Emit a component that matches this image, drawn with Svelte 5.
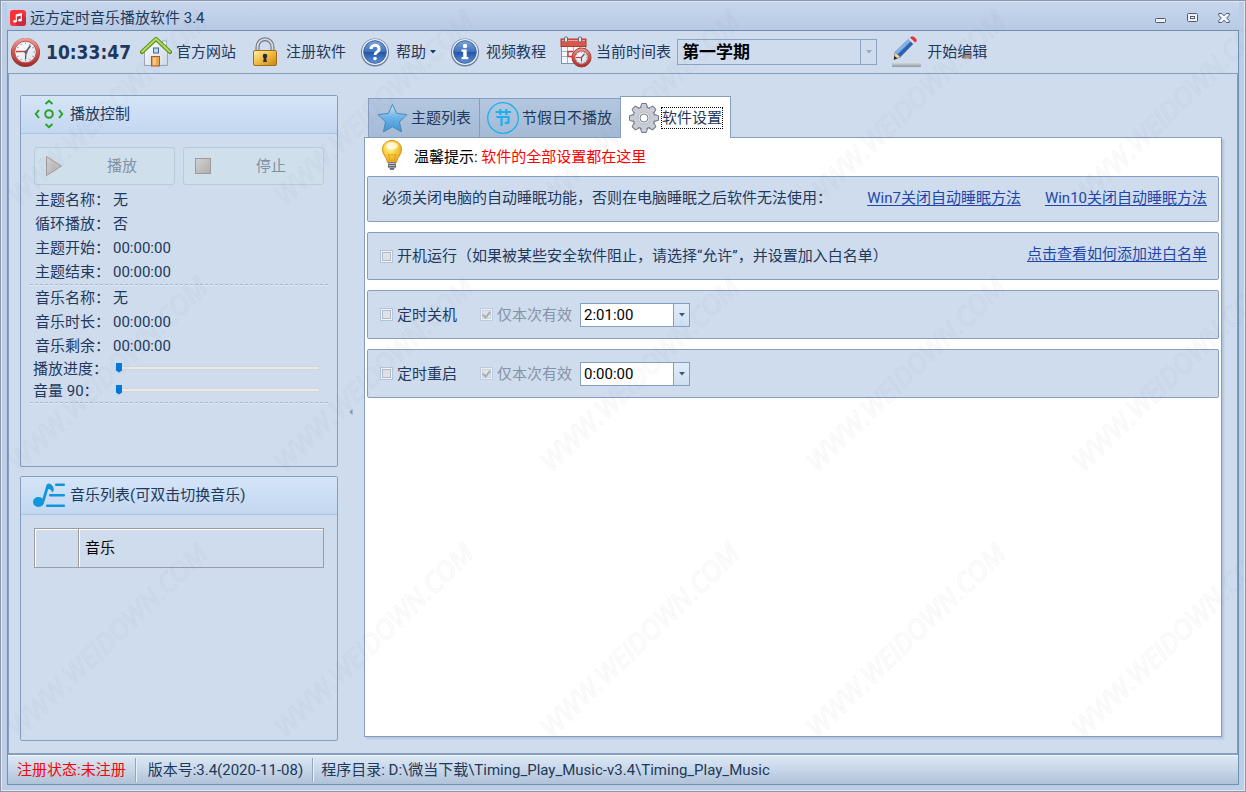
<script>
  const themeRows = [
    ['主题名称：', '无'],
    ['循环播放：', '否'],
    ['主题开始：', '00:00:00'],
    ['主题结束：', '00:00:00']
  ];
  const musicRows = [
    ['音乐名称：', '无'],
    ['音乐时长：', '00:00:00'],
    ['音乐剩余：', '00:00:00']
  ];
  const timers = [
    { id: 'shutdown', label: '定时关机', time: '2:01:00' },
    { id: 'restart', label: '定时重启', time: '0:00:00' }
  ];
  const teeth = [0, 45, 90, 135, 180, 225, 270, 315];
  const ticks = [0, 30, 60, 90, 120, 150, 180, 210, 240, 270, 300, 330];
</script>

<div class="window" lang="zh-CN">
  <header class="titlebar">
    <svg class="app-icon" viewBox="0 0 16 16" width="16" height="16" aria-hidden="true">
      <rect width="16" height="16" rx="3" fill="#fb3038" />
      <path d="M6 4.5 11.5 3.3 16 8v5a3 3 0 0 1-3 3H8l-3-3z" fill="#b92a3c" opacity=".75" />
      <path d="M6.3 11V5l5-1.2v6" fill="none" stroke="#fff" stroke-width="1.2" />
      <path d="M6.3 5.2l5-1.2v1.6l-5 1.2z" fill="#fff" />
      <ellipse cx="5" cy="11.3" rx="1.8" ry="1.4" fill="#fff" />
      <ellipse cx="10" cy="10.2" rx="1.8" ry="1.4" fill="#fff" />
    </svg>
    <span class="title">远方定时音乐播放软件 3.4</span>
    <button class="winbtn" aria-label="最小化">
      <svg viewBox="0 0 12 12" width="12" height="12"><rect x=".5" y="6.5" width="10" height="4" rx="1" fill="#eef2f8" stroke="#4f5a70" /></svg>
    </button>
    <button class="winbtn" aria-label="最大化">
      <svg viewBox="0 0 12 12" width="12" height="12"><rect x=".5" y="1.5" width="10" height="8" rx="1" fill="#eef2f8" stroke="#4f5a70" /><rect x="3.5" y="4.5" width="4" height="2" fill="#fff" stroke="#4f5a70" /></svg>
    </button>
    <button class="winbtn" aria-label="关闭">
      <svg viewBox="0 0 12 12" width="12" height="12"><path d="M.8 1.5h3L6 3.8 8.2 1.5h3v2L8.6 6l2.6 2.5v2h-3L6 8.2 3.8 10.500h-3v-2L3.400 6 .8 3.500z" fill="#f3f6fb" stroke="#4f5a70" stroke-linejoin="round" /></svg>
    </button>
  </header>

  <div class="frame">
    <nav class="toolbar">
      <div class="tool clock">
        <svg viewBox="0 0 32 32" width="32" height="32" aria-hidden="true">
          <defs>
            <linearGradient id="redRing" x1="0" y1="0" x2="0" y2="1"><stop offset="0" stop-color="#f0a49c" /><stop offset=".5" stop-color="#d4544c" /><stop offset="1" stop-color="#a82a28" /></linearGradient>
            <linearGradient id="dial" x1="0" y1="0" x2="1" y2="1"><stop offset="0" stop-color="#ffffff" /><stop offset="1" stop-color="#dbe1e9" /></linearGradient>
          </defs>
          <circle cx="16.500" cy="16.500" r="14.500" fill="#8b3a3a" />
          <circle cx="16.500" cy="16" r="14" fill="url(#redRing)" />
          <circle cx="16.500" cy="16" r="10.800" fill="url(#dial)" stroke="#b25550" />
          {#each ticks as a}
            <path d="M16.500 6.500v1.500" stroke="#8d95a2" transform="rotate({a} 16.500 16)" />
          {/each}
          <path d="M17 16 21.500 9.500" stroke="#555d69" stroke-width="1.600" />
          <path d="M17 16 16.500 23.500" stroke="#555d69" stroke-width="1.300" />
          <path d="M7 15.500h10" stroke="#cf3d37" stroke-width="1.400" />
          <circle cx="17" cy="16" r="1.800" fill="#5f6874" />
        </svg>
        <time>10:33:47</time>
      </div>
      <button class="tool">
        <svg viewBox="0 0 32 32" width="32" height="32" aria-hidden="true">
          <defs><linearGradient id="wall" x1="0" y1="0" x2="1" y2="1"><stop offset="0" stop-color="#fff" /><stop offset="1" stop-color="#cfd9e4" /></linearGradient></defs>
          <rect x="22.500" y="5" width="4" height="8" fill="#f4f6f9" stroke="#a6afbd" />
          <path d="M4.500 14.500 16 4l11.500 10.500V29.500h-23z" fill="url(#wall)" stroke="#9aa5b5" />
          <path d="M2 16 16 3l14 13" fill="none" stroke="#5d8f1e" stroke-width="4.200" stroke-linecap="round" stroke-linejoin="round" />
          <path d="M2.200 15.700 16 2.800l13.800 12.900" fill="none" stroke="#b4dc62" stroke-width="2" stroke-linecap="round" />
          <rect x="13.500" y="12" width="5" height="5" fill="#bcd6f5" stroke="#49679b" />
          <rect x="11.500" y="20.500" width="8" height="9.500" fill="#e9a455" stroke="#a8601f" />
          <path d="M13 22h3v7h-3z" fill="#f8c98a" />
        </svg>
        <span>官方网站</span>
      </button>
      <button class="tool">
        <svg viewBox="0 0 32 32" width="32" height="32" aria-hidden="true">
          <defs><linearGradient id="gold" x1="0" y1="0" x2="1" y2="1"><stop offset="0" stop-color="#fff0ae" /><stop offset=".45" stop-color="#f3c04a" /><stop offset="1" stop-color="#c78416" /></linearGradient></defs>
          <path d="M7.500 17V11a7.500 7.800 0 0 1 15 0v6" fill="none" stroke="#6f7680" stroke-width="4" />
          <path d="M7.500 17V11a7.500 7.800 0 0 1 15 0v6" fill="none" stroke="#d5dae0" stroke-width="1.800" />
          <rect x="3.500" y="14.500" width="23" height="15" rx="1.500" fill="url(#gold)" stroke="#a06c14" />
          <circle cx="15" cy="20" r="2.300" fill="#2c2c30" /><path d="M14 20h2l.8 6h-3.600z" fill="#2c2c30" />
        </svg>
        <span>注册软件</span>
      </button>
      <button class="tool">
        <svg viewBox="0 0 32 32" width="32" height="32" aria-hidden="true">
          <defs>
            <linearGradient id="orb" x1="0" y1="0" x2="0" y2="1"><stop offset="0" stop-color="#7fa6dc" /><stop offset=".5" stop-color="#3c6fbe" /><stop offset=".52" stop-color="#2455a6" /><stop offset="1" stop-color="#5c93dc" /></linearGradient>
          </defs>
          <circle cx="15" cy="16.500" r="14" fill="#6c7e9d" />
          <circle cx="15" cy="16" r="13" fill="#eef2f8" />
          <circle cx="15" cy="16" r="11.300" fill="url(#orb)" stroke="#42649c" />
          <path d="M11 13a4 3.600 0 1 1 6 3c-1.500.9-2 1.500-2 3" fill="none" stroke="#fff" stroke-width="3" />
          <circle cx="15" cy="22.500" r="1.800" fill="#fff" />
        </svg>
        <span>帮助</span>
        <svg viewBox="0 0 6 4" width="6" height="4" aria-hidden="true"><path d="M0 0h6L3 3.500z" fill="#1e395b" /></svg>
      </button>
      <button class="tool">
        <svg viewBox="0 0 32 32" width="32" height="32" aria-hidden="true">
          <circle cx="15" cy="16.500" r="14" fill="#6c7e9d" />
          <circle cx="15" cy="16" r="13" fill="#eef2f8" />
          <circle cx="15" cy="16" r="11.300" fill="url(#orb)" stroke="#42649c" />
          <circle cx="15" cy="10" r="2.200" fill="#fff" />
          <path d="M11.500 13.500h5.200v7.500h1.600v2.200h-6.800V21h1.700v-5.300h-1.700z" fill="#fff" />
        </svg>
        <span>视频教程</span>
      </button>
      <div class="tool schedule">
        <svg viewBox="0 0 32 32" width="32" height="32" aria-hidden="true">
          <rect x="1.500" y="4" width="24" height="23.500" fill="#f5f8fc" stroke="#7c93b8" />
          <path d="M2 15.500h23M2 20.500h23M7.500 11v16M13.500 11v16M19.500 11v16" stroke="#9fb3d2" />
          <rect x="1" y="3" width="25" height="7.500" fill="#d9584b" stroke="#ac3a30" />
          <path d="M2 4.500h23" stroke="#f2a49a" />
          <rect x="4.500" y="1" width="3" height="5" rx="1" fill="#e1e6ed" stroke="#616b7b" /><rect x="18.500" y="1" width="3" height="5" rx="1" fill="#e1e6ed" stroke="#616b7b" />
          <path d="M13 15.500H8v5h5" fill="none" stroke="#d13a31" stroke-width="1.400" />
          <circle cx="21.500" cy="21.500" r="9.500" fill="url(#redRing)" stroke="#a33a36" />
          <circle cx="21.500" cy="21.500" r="6.700" fill="url(#dial)" stroke="#b25550" />
          {#each ticks as a}
            <path d="M21.500 15.500v1.200" stroke="#7d8694" transform="rotate({a} 21.500 21.500)" />
          {/each}
          <path d="M21.500 21.500 24.500 18M21.500 21.500v4" stroke="#555d69" stroke-width="1.200" /><path d="M16 21.500h5.500" stroke="#cf3d37" stroke-width="1.200" />
        </svg>
        <label for="term">当前时间表</label>
        <div class="select-box">
          <select id="term"><option>第一学期</option></select>
          <span class="select-arrow"><svg viewBox="0 0 6 4" width="6" height="4" aria-hidden="true"><path d="M0 0h6L3 3.500z" fill="#98a9c1" /></svg></span>
        </div>
      </div>
      <button class="tool">
        <svg viewBox="0 0 32 32" width="32" height="32" aria-hidden="true">
          <defs>
            <linearGradient id="shelf" x1="0" y1="0" x2="0" y2="1"><stop offset="0" stop-color="#dfe3e8" /><stop offset="1" stop-color="#8e98a5" /></linearGradient>
          </defs>
          <rect x="1" y="26" width="29" height="5" rx="1" fill="url(#shelf)" />
          <path d="M3 23.500 4 16 9.500 21z" fill="#f1d5a6" stroke="#7c6a4d" stroke-width=".6" />
          <path d="M2.900 23.700 3.400 20 6.500 22.300z" fill="#222" />
          <path d="M4 16 18 2.500l5 4.700L9.500 21z" fill="#2d62ae" />
          <path d="M4 16 18 2.500l2.400 2.200L6.500 18.300z" fill="#83b0e8" />
          <path d="M17.300 3.200 19 1.500l5.200 4.900-1.800 1.800z" fill="#d6dce4" />
          <path d="M19 1.500 20.500.6Q22.500.2 24.400 2T25.700 5L24.200 6.400z" fill="#e2353a" />
        </svg>
        <span>开始编辑</span>
      </button>
    </nav>

    <main class="body">
      <aside class="side">
        <section class="panel">
          <h2>
            <svg viewBox="0 0 32 32" width="32" height="32" aria-hidden="true"><g fill="none" stroke="#27a527" stroke-width="2"><circle cx="16" cy="15" r="3.800" /><path d="M12.500 5 16 1.800 19.500 5M12.500 25 16 28.200 19.500 25M6 11 2.800 15 6 19M26 11l3.200 4L26 19" /></g></svg>
            <span>播放控制</span>
          </h2>
          <div class="controls">
            <button disabled>
              <svg viewBox="0 0 24 24" width="24" height="24" aria-hidden="true"><defs><linearGradient id="grey" x1="0" y1="0" x2="1" y2="1"><stop offset="0" stop-color="#d2d2d2" /><stop offset="1" stop-color="#adadad" /></linearGradient></defs><path d="M4.500 2.500 19.500 12 4.500 21.500z" fill="url(#grey)" stroke="#a09b98" /></svg>
              <span>播放</span>
            </button>
            <button disabled>
              <svg viewBox="0 0 24 24" width="24" height="24" aria-hidden="true"><rect x="4.500" y="4.500" width="15" height="15" fill="url(#grey)" stroke="#a09b98" /></svg>
              <span>停止</span>
            </button>
          </div>
          <dl>
            {#each themeRows as [k, v]}<div><dt>{k}</dt><dd>{v}</dd></div>{/each}
          </dl>
          <hr />
          <dl>
            {#each musicRows as [k, v]}<div><dt>{k}</dt><dd>{v}</dd></div>{/each}
          </dl>
          <div class="slide"><label for="progress">播放进度：</label><input id="progress" type="range" min="0" max="100" value="0" /></div>
          <div class="slide"><label for="volume">音量 90：</label><input id="volume" type="range" min="0" max="100" value="0" /></div>
          <hr />
        </section>

        <section class="panel list">
          <h2>
            <svg viewBox="0 0 32 32" width="32" height="32" aria-hidden="true"><g fill="#1296db"><ellipse cx="5.500" cy="22" rx="5.500" ry="5" /><path d="M8.500 22 13.500 5q1-2.300 3.500-1.200Q21 6 20.800 10.500l-1.800 2q-.5-3.500-3.700-3.500L11 23z" /><rect x="22" y="3.500" width="10" height="2.500" rx="1" /><rect x="16" y="14" width="16" height="2.500" rx="1" /><rect x="13" y="24.500" width="19" height="2.500" rx="1" /></g></svg>
            <span>音乐列表(可双击切换音乐)</span>
          </h2>
          <table>
            <thead><tr><th class="mark" aria-label="序号"></th><th>音乐</th></tr></thead>
          </table>
        </section>
      </aside>

      <div class="splitter"><svg viewBox="0 0 4 6" width="4" height="6" aria-hidden="true"><path d="M3.500 0v6L.5 3z" fill="#7c96ba" /></svg></div>

      <section class="content">
        <div class="tabs" role="tablist">
          <button role="tab" aria-selected="false">
            <svg viewBox="0 0 32 32" width="32" height="32" aria-hidden="true"><defs><linearGradient id="star" x1="0" y1="0" x2="0" y2="1"><stop offset="0" stop-color="#c6e4f8" /><stop offset=".5" stop-color="#68b2e6" /><stop offset="1" stop-color="#3f94d6" /></linearGradient></defs><path d="M16.500 2.500 20.800 11.500l10.200 1.100-7.600 7.300 2.200 10-9.100-5.200-9.100 5.200 2.200-10L2 12.600l10.200-1.100z" fill="url(#star)" stroke="#5585b3" stroke-linejoin="round" /></svg>
            <span>主题列表</span>
          </button>
          <button role="tab" aria-selected="false">
            <svg viewBox="0 0 32 32" width="32" height="32" aria-hidden="true"><circle cx="16" cy="16" r="15.300" fill="none" stroke="#1cb0ee" stroke-width="1.300" /><text x="16" y="22" text-anchor="middle" class="glyph">节</text></svg>
            <span>节假日不播放</span>
          </button>
          <button role="tab" aria-selected="true">
            <svg viewBox="0 0 32 32" width="32" height="32" aria-hidden="true">
              <defs><linearGradient id="steel" x1="0" y1="0" x2="1" y2="1"><stop offset="0" stop-color="#e6e9ee" /><stop offset="1" stop-color="#8f97a5" /></linearGradient></defs>
              <g fill="url(#steel)" stroke="#6e7683">
                {#each teeth as a}<path d="M12 7 13.700 1.500h4.600L20 7z" stroke-linejoin="round" transform="rotate({a} 16 16)" />{/each}
                <circle cx="16" cy="16" r="10.800" />
              </g>
              {#each teeth as a}<path d="M13 8 14.300 2.500h3.400L19 8z" fill="#c9cdd5" transform="rotate({a} 16 16)" />{/each}
              <circle cx="16" cy="16" r="10.200" fill="#c9cdd5" />
              <circle cx="16" cy="16" r="6" fill="#e7eaee" stroke="#b4bac4" />
              <circle cx="16" cy="16" r="4" fill="#fff" stroke="#7b8390" />
            </svg>
            <span>软件设置</span>
          </button>
        </div>

        <div class="page" role="tabpanel">
          <p class="tip">
            <svg viewBox="0 0 32 32" width="32" height="32" aria-hidden="true">
              <defs><radialGradient id="bulb" cx=".4" cy=".3" r=".8"><stop offset="0" stop-color="#fff8c9" /><stop offset=".4" stop-color="#fbd548" /><stop offset="1" stop-color="#e3960f" /></radialGradient></defs>
              <path d="M16 1.500c-5.500 0-9.500 4-9.500 9 0 6 4.500 7 5 13h9c.5-6 5-7 5-13 0-5-4-9-9.500-9z" fill="url(#bulb)" stroke="#d98f1a" />
              <ellipse cx="16" cy="7" rx="6" ry="3.500" fill="#fff" opacity=".65" />
              <path d="M14 22l-1.500-7 2 1.500L16 15l1.500 1.500 2-1.500L18 22" fill="none" stroke="#e0a02c" />
              <rect x="12.500" y="23.500" width="7" height="5.500" rx="1" fill="#b9bfc9" stroke="#737a86" />
              <path d="M12.500 25.500h7M12.500 27.500h7" stroke="#5f6672" /><path d="M14 30h4" stroke="#4b505a" stroke-width="1.500" />
            </svg>
            <span>温馨提示: <strong>软件的全部设置都在这里</strong></span>
          </p>

          <div class="group sleep">
            <span>必须关闭电脑的自动睡眠功能，否则在电脑睡眠之后软件无法使用：</span>
            <a class="push" href="#win7">Win7关闭自动睡眠方法</a>
            <a href="#win10">Win10关闭自动睡眠方法</a>
          </div>
          <div class="group boot">
            <label><input type="checkbox" />开机运行（如果被某些安全软件阻止，请选择“允许”，并设置加入白名单）</label>
            <a class="push" href="#whitelist">点击查看如何添加进白名单</a>
          </div>
          {#each timers as t}
            <div class="group">
              <label><input type="checkbox" />{t.label}</label>
              <label class="once"><input type="checkbox" checked disabled />仅本次有效</label>
              <div class="timebox">
                <input type="text" id={t.id} aria-label={t.label} value={t.time} />
                <button aria-label="选择时间"><svg viewBox="0 0 6 4" width="6" height="4"><path d="M0 0h6L3 3.500z" fill="#3c567d" /></svg></button>
              </div>
            </div>
          {/each}
        </div>
      </section>
    </main>

    <footer class="status">
      <span class="alert">注册状态:未注册</span>
      <span>版本号:3.4(2020-11-08)</span>
      <span>程序目录: D:\微当下载\Timing_Play_Music-v3.4\Timing_Play_Music</span>
    </footer>
  </div>

  <svg class="watermark" width="100%" height="100%" aria-hidden="true">
    <defs>
      <pattern id="mark" x="-26" y="-25" width="266" height="266" patternUnits="userSpaceOnUse">
        <text x="133" y="142" text-anchor="middle" transform="rotate(-44 133 133)">WWW.WEIDOWN.COM</text>
      </pattern>
    </defs>
    <rect width="100%" height="100%" fill="url(#mark)" />
  </svg>
</div>

<style>
  :global(body) { margin: 0; }
  .window, .window * { box-sizing: border-box; }
  .window {
    position: relative;
    display: flex;
    flex-direction: column;
    min-height: 100vh;
    padding: 1px 6px 6px;
    border: 1px solid #8d95a7;
    background: #bccde6;
    box-shadow: inset 0 0 0 1px #dfe8f5;
    color: #1e395b;
    font: 15px/20px Roboto, "Noto Sans CJK SC", sans-serif;
  }
  button, input, select { font: inherit; color: inherit; }
  button { margin: 0; padding: 0; border: 0; background: none; }
  svg { flex: none; display: block; }
  a { color: #1f47a8; text-underline-offset: 2px; }

  .titlebar { display: flex; align-items: center; height: 28px; padding: 4px 0 0 3px; background: linear-gradient(#c5d6ed, #b9cbe4); }
  .title { flex: 1; padding-left: 4px; }
  .winbtn { display: grid; place-items: center; width: 32px; height: 20px; }
  .winbtn:last-child { width: 30px; }

  .frame { flex: 1; display: flex; flex-direction: column; border: 1px solid #6f8fb3; background: #cfdcee; }

  .toolbar { display: flex; align-items: center; height: 43px; padding: 0 1px; border-bottom: 1px solid #859ebf; }
  .tool { display: flex; align-items: center; gap: 4px; padding-right: 14px; white-space: nowrap; }
  .tool.clock { gap: 5px; padding-right: 9px; }
  time { font: bold 19px/24px "DejaVu Sans Condensed", "DejaVu Sans", sans-serif; }
  .select-box { display: flex; width: 200px; height: 26px; margin-left: 2px; border: 1px solid #8ba3c5; }
  select { flex: 1; min-width: 0; padding: 0 4px; border: 0; background: none; appearance: none; color: #000; font-size: 17px; line-height: 24px; font-weight: bold; }
  .select-arrow { display: grid; place-items: center; width: 16px; border-left: 1px solid #8ba3c5; }

  .body { flex: 1; display: flex; padding: 21px 15px 12px 11px; border: solid #859ebf; border-width: 0 1px 2px; }
  .side { display: flex; flex-direction: column; gap: 9px; width: 318px; flex: none; }
  .panel { padding-bottom: 62px; border: 1px solid #859ebf; border-radius: 2px; }
  .list { flex: 1; padding-bottom: 0; }
  h2 { display: flex; align-items: center; gap: 5px; height: 38px; margin: 0; padding: 0 12px; border-bottom: 1px solid #a9c5e2; background: linear-gradient(#d5e5f8, #c3d7f0); font-size: 15px; line-height: 20px; font-weight: normal; }
  h2 span { padding-bottom: 2px; }
  .controls { display: grid; grid-template-columns: 1fr 1fr; gap: 8px; padding: 13px 13px 3px; }
  .controls button { display: flex; align-items: center; height: 38px; padding-left: 7px; border: 1px solid #b8cbdc; border-radius: 3px; background: #cfdfec; color: #8291a3; }
  .controls span { flex: 1; padding-left: 4px; }
  dl { margin: 0; padding: 0 14px; }
  dl div { display: flex; gap: 3px; line-height: 24px; }
  dt { width: 75px; }
  dd { margin: 0; }
  hr { height: 2px; margin: 0 9px; border: 0; border-top: 1px dashed #a5b6cf; border-bottom: 1px dashed #e4ecf6; }
  .slide { display: flex; align-items: center; height: 22px; padding: 0 17px 0 12px; }
  .slide label { width: 82px; white-space: nowrap; }
  input[type='range'] { flex: 1; min-width: 0; height: 16px; margin: 0 0 3px; appearance: none; background: none; }
  input[type='range']::-webkit-slider-runnable-track { height: 4px; border: 1px solid #d3d5da; background: #e7eaea; }
  input[type='range']::-webkit-slider-thumb { appearance: none; width: 6px; height: 10px; margin-top: -4px; background: #0078d7; clip-path: polygon(0 0, 100% 0, 100% 80%, 50% 100%, 0 80%); }

  table { width: calc(100% - 26px); margin: 13px; border-collapse: collapse; color: #000; }
  th { height: 39px; padding: 0 6px; border: 1px solid #9b9da2; box-shadow: inset 1px 1px #fff; text-align: left; font-weight: normal; }
  th.mark { width: 44px; }

  .splitter { display: grid; place-items: center; width: 26px; padding-bottom: 12px; flex: none; }

  .content { flex: 1; min-width: 0; display: flex; flex-direction: column; padding-bottom: 4px; }
  .tabs { display: flex; align-items: flex-end; height: 42px; padding: 0 4px; }
  .tabs button { display: flex; align-items: center; gap: 3px; height: 39px; padding: 0 8px 0 7px; border: 1px solid #859ebf; border-width: 1px 0 0 1px; background: linear-gradient(#b3c7e0, #a4bad5); white-space: nowrap; }
  .tabs button[aria-selected='true'] { z-index: 1; gap: 1px; height: 42px; margin-bottom: -1px; padding-right: 7px; border-width: 1px 1px 0; background: #fff; }
  .tabs button[aria-selected='true'] span { border: 1px dotted #000; }
  .glyph { fill: #1cb0ee; font-size: 17px; font-weight: bold; }

  .page { flex: 1; display: flex; flex-direction: column; gap: 10px; padding: 0 2px 2px; border: 1px solid #859ebf; background: #fff; box-shadow: 2px 2px 2px #b5c4da; }
  .tip { display: flex; align-items: center; gap: 6px; height: 38px; margin: 0 0 -10px; padding-left: 9px; color: #000; }
  .tip svg { margin-bottom: 4px; }
  strong { color: #f00; font-weight: normal; }
  .group { display: flex; align-items: center; height: 49px; padding: 0 11px 0 12px; border: 1px solid #859ebf; border-radius: 2px; background: #cfdcee; white-space: nowrap; }
  .sleep { gap: 24px; height: 46px; padding-left: 14px; padding-bottom: 2px; }
  .boot { height: 48px; }
  .push { margin-left: auto; }
  .boot .push { padding-bottom: 4px; }
  .group label { display: flex; align-items: center; gap: 4px; }
  input[type='checkbox'] { display: grid; place-items: center; width: 13px; height: 13px; margin: 0; appearance: none; border: 1px solid #aec3de; background: #dfe3e8; box-shadow: inset 0 0 0 1px #f4f5f7, inset 0 0 0 2px #b3b9c3; }
  input[type='checkbox']:checked { border-color: #bccbdf; box-shadow: inset 0 0 0 1px #edf0f3, inset 0 0 0 2px #ccd2da; }
  input[type='checkbox']:checked::after { content: ''; width: 3px; height: 6px; margin-bottom: 2px; border: solid #a6adb8; border-width: 0 2px 2px 0; transform: rotate(40deg); }
  .once { margin-left: 23px; color: #8593a5; }
  .timebox { display: flex; width: 110px; height: 24px; margin-left: 8px; border: 1px solid #859ebf; background: #fff; }
  .timebox input { flex: 1; min-width: 0; padding: 0 3px; border: 0; background: none; color: #000; }
  .timebox button { display: grid; place-items: center; width: 16px; border-left: 1px solid #859ebf; background: linear-gradient(#e1ecf8, #cfdff0); }

  .status { display: flex; align-items: center; height: 29px; border-top: 1px solid #f3f7fc; background: linear-gradient(#dbe7f5, #c9d8ea 45%, #b0c2d7); white-space: nowrap; }
  .status span { padding: 2px 9px 2px 8px; }
  .status span + span { border-left: 1px solid #93a7c1; box-shadow: inset 1px 0 #e8f0f9; }
  .status span:nth-child(2) { padding-left: 12px; }
  .status .alert { padding-left: 9px; color: #f00; }

  .watermark { position: absolute; inset: 0; pointer-events: none; }
  .watermark text { fill: none; stroke: #33425c; stroke-width: 1; stroke-opacity: .05; font: italic 27px "Open Sans", sans-serif; }
</style>
